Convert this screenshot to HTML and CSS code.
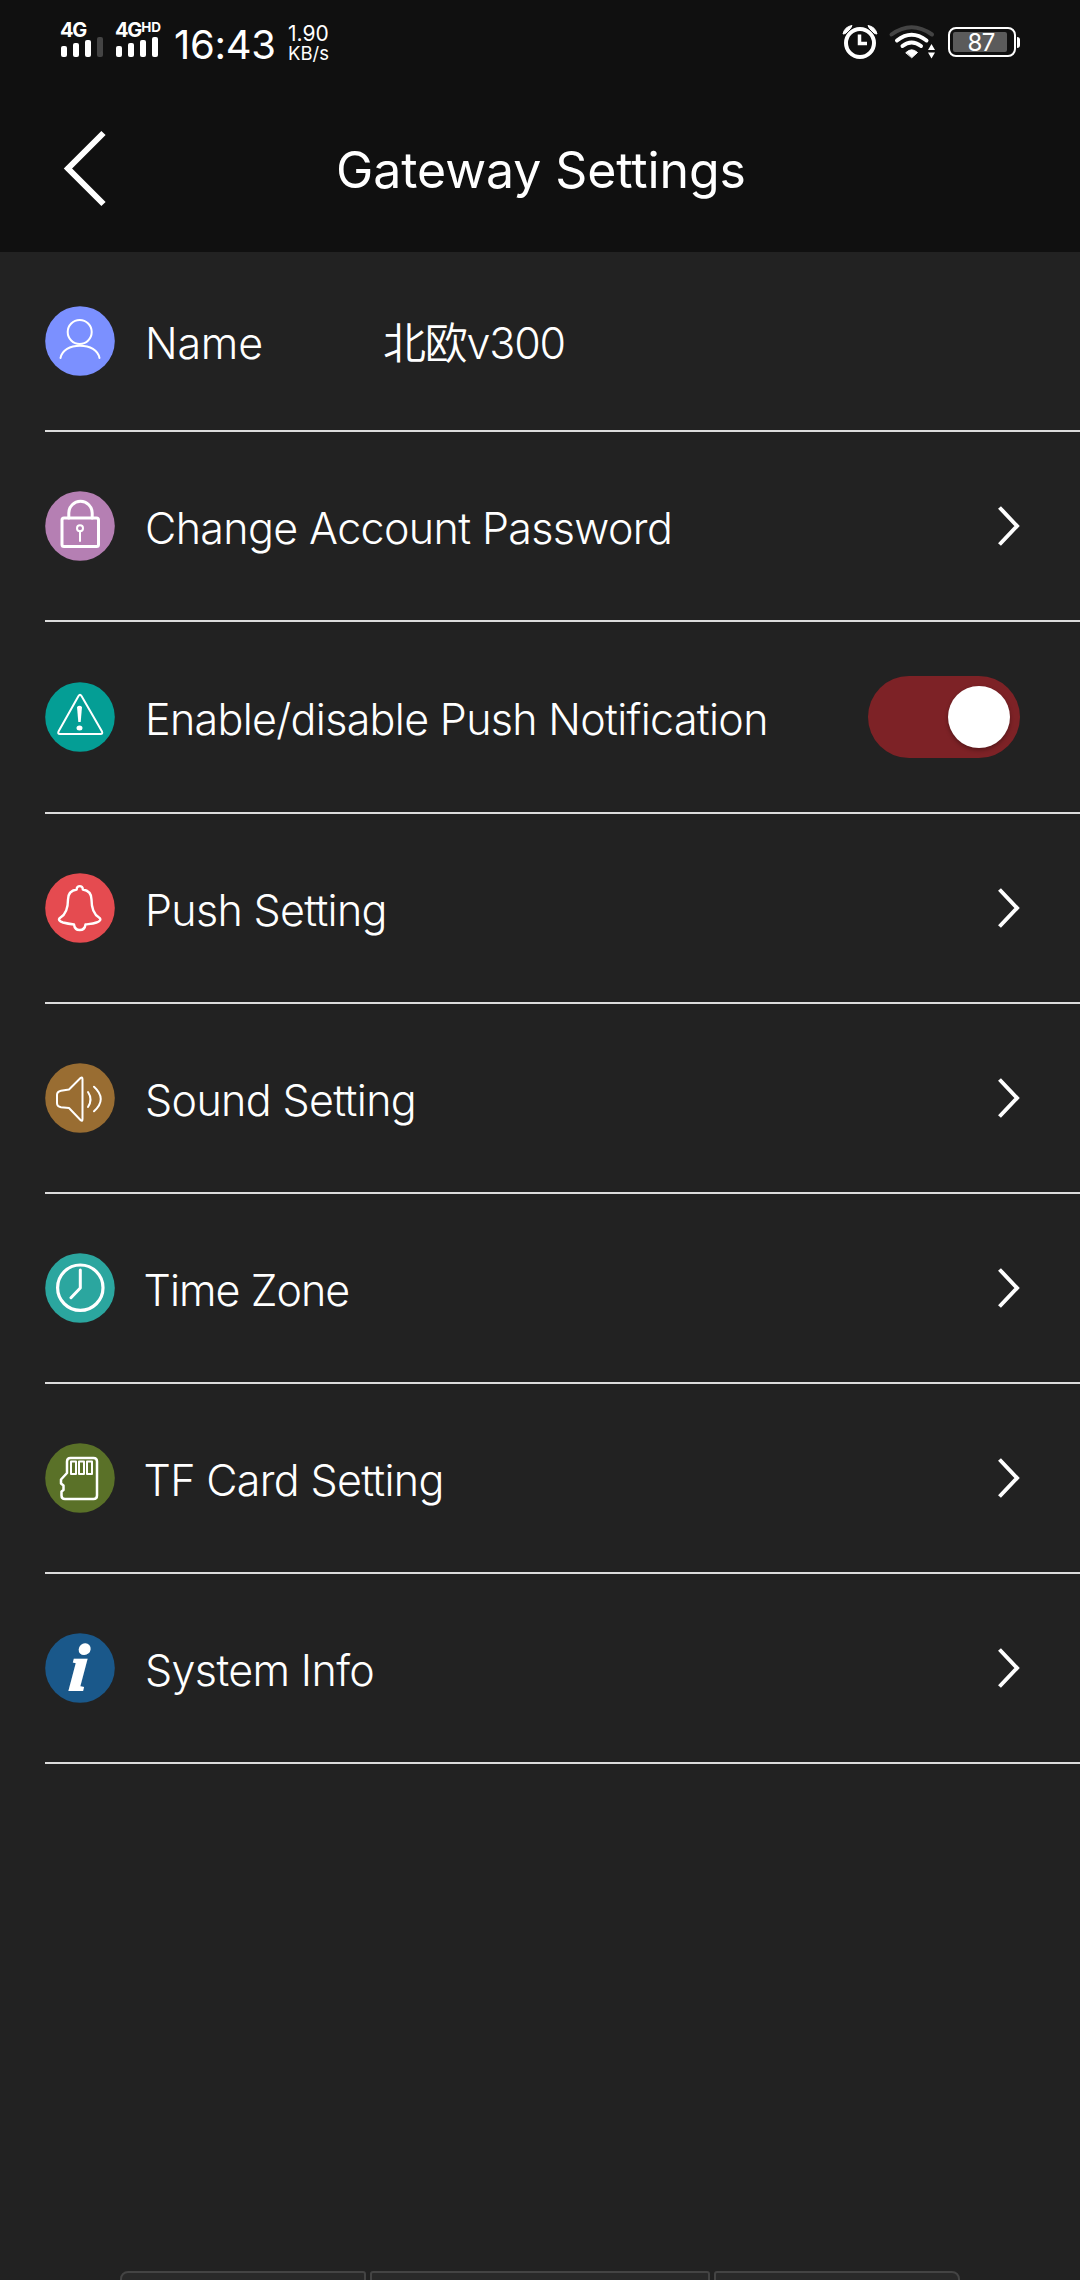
FILE: index.html
```html
<!DOCTYPE html>
<html lang="en">
<head>
<meta charset="utf-8">
<title>Gateway Settings</title>
<link rel="stylesheet" href="styles.css">
</head>
<body>
<div class="screen">
  <header class="top">
    <div class="status">
      <div class="sim">
        <div class="net">4G</div>
        <svg class="bars" width="42" height="20" viewBox="0 0 42 20"><g fill="#fff"><rect x="0" y="9" width="6" height="11" rx="2"/><rect x="12" y="6" width="6" height="14" rx="2"/><rect x="24" y="3" width="6" height="17" rx="2"/><rect x="36" y="0" width="6" height="20" rx="2" fill="#444"/></g></svg>
      </div>
      <div class="sim">
        <div class="net">4G<span class="hd">HD</span></div>
        <svg class="bars" width="42" height="20" viewBox="0 0 42 20"><g fill="#fff"><rect x="0" y="9" width="6" height="11" rx="2"/><rect x="12" y="6" width="6" height="14" rx="2"/><rect x="24" y="3" width="6" height="17" rx="2"/><rect x="36" y="0" width="6" height="20" rx="2"/></g></svg>
      </div>
      <div class="time">16:43</div>
      <div class="speed"><span class="rate">1.90</span><span class="unit">KB/s</span></div>
      <div class="indicators">
        <svg width="36" height="36" viewBox="0 0 36 36" fill="none" stroke="#fff"><circle cx="18" cy="19" r="14" stroke-width="4"/><path d="M17.500 10.500V19.500H25" stroke-width="3.500"/><path d="M1 10A11 11 0 0 1 10 1.500L8.500 4.500 3.500 9.500ZM35 10A11 11 0 0 0 26 1.500L27.500 4.500 32.500 9.500Z" fill="#fff" stroke-width="1"/></svg>
        <svg class="wifi" width="47" height="36" viewBox="0 0 47 36" fill="none" stroke-width="4" stroke-linecap="round"><path d="M2.500 10.500Q22.500-4 43 10.500" stroke="#444"/><path d="M8 16.500Q22.500 5 37.500 16.500M13.500 22Q22.500 15 32 22" stroke="#fff"/><path d="M17 28.500Q22.500 23 28.500 28.500L23 33.500Z" fill="#fff" stroke="#fff" stroke-width="1"/><path d="M39 26 42.500 20 46 26ZM39 28.500 42.500 34.500 46 28.500Z" fill="#fff"/></svg>
        <div class="battery"><div class="level">87</div></div>
      </div>
    </div>
    <div class="titlebar">
      <svg class="back" width="44" height="76" viewBox="0 0 44 76" fill="none" stroke="#fff" stroke-width="6"><path d="M40.500 3 5 38.500 40.500 74"/></svg>
      <h1 class="title">Gateway Settings</h1>
    </div>
  </header>

  <main class="list">
    <div class="row first">
      <svg class="icon" viewBox="0 0 70 70"><circle cx="35" cy="35" r="34.800" fill="#7b90ff"/><g class="line"><circle cx="34.700" cy="26" r="12"/><path d="M15.500 52C17 44 25 39.700 35 39.700S53 44 54.500 52"/></g></svg>
      <div class="label name">Name</div>
      <div class="label value">北欧v300</div>
    </div>
    <div class="row">
      <svg class="icon" viewBox="0 0 70 70"><circle cx="35" cy="35" r="34.800" fill="#b57fb3"/><g class="line"><path d="M23.800 27V22A11.700 11.700 0 0 1 47.200 22V27" stroke-width="3"/><rect x="17" y="27" width="36.500" height="28.500" rx="2" stroke-width="3"/><circle cx="35" cy="37.300" r="3"/><path d="M35 40.500V50"/></g></svg>
      <div class="label">Change Account Password</div>
      <svg class="chev" viewBox="0 0 22 40"><path d="M1.500 1.500 19 20 1.500 38.500"/></svg>
    </div>
    <div class="row tall">
      <svg class="icon" viewBox="0 0 70 70"><circle cx="35" cy="35" r="34.800" fill="#049e95"/><g class="line"><path d="M33.500 14Q35 11.500 36.500 14L57 49.500Q58 52 55.500 52H15Q12.500 52 13.500 49.500Z"/></g><path d="M32 25Q34.500 22.500 37 25L35.700 40H33.300Z" fill="#fff"/><ellipse cx="34.500" cy="46" rx="3" ry="2.500" fill="#fff"/></svg>
      <div class="label push">Enable/disable Push Notification</div>
      <div class="toggle"><div class="knob"></div></div>
    </div>
    <div class="row">
      <svg class="icon" viewBox="0 0 70 70"><circle cx="35" cy="35" r="34.800" fill="#e54b50"/><g class="line"><path stroke-width="2.400" d="M31.700 16.500C31.500 12 38 12 37.800 16.500C44 17.500 46.500 21.500 46.500 26.500C46.500 37 49 41.500 54 44.500C57 46.500 54.500 48.500 51.500 49.500C47 51 43 51 40.500 51.500C40 55.500 38 57 34.700 57S29.500 55.500 29 51.500C25 51 22 50.500 18 49.500C14.500 48.500 12.500 46.500 15.500 44.500C20.500 41.500 23 37 23 26.500C23 21.500 25.500 17.500 31.700 16.500Z"/></g></svg>
      <div class="label push">Push Setting</div>
      <svg class="chev" viewBox="0 0 22 40"><path d="M1.500 1.500 19 20 1.500 38.500"/></svg>
    </div>
    <div class="row">
      <svg class="icon" viewBox="0 0 70 70"><circle cx="35" cy="35" r="34.800" fill="#996d32"/><g class="line"><path d="M24 26.500 35.500 15Q37.500 13.500 37.500 16.500V56Q37.500 59 35.500 57L24 45 16 44.200Q12 43.500 12 40V32Q12 28.500 16 27.700ZM43 29Q48 36.500 43 44M49 23.700Q62.500 36 49 48.300"/></g></svg>
      <div class="label">Sound Setting</div>
      <svg class="chev" viewBox="0 0 22 40"><path d="M1.500 1.500 19 20 1.500 38.500"/></svg>
    </div>
    <div class="row">
      <svg class="icon" viewBox="0 0 70 70"><circle cx="35" cy="35" r="34.800" fill="#2ba69f"/><g class="line"><circle cx="35.300" cy="34.700" r="22.700" stroke-width="3.200"/><path stroke-width="3" d="M35.300 17V35L26 44.700"/></g></svg>
      <div class="label zone">Time Zone</div>
      <svg class="chev" viewBox="0 0 22 40"><path d="M1.500 1.500 19 20 1.500 38.500"/></svg>
    </div>
    <div class="row">
      <svg class="icon" viewBox="0 0 70 70"><circle cx="35" cy="35" r="34.800" fill="#5a7128"/><g class="line"><path stroke-width="2.500" d="M25.500 15H48.500Q52 15 52 18.500V52.500Q52 56 48.500 56H20Q16.500 56 16.500 52.500V48.500L18.500 47V42.500L16 40.500V36.500L22 30V18.500Q22 15 25.500 15Z"/><path d="M26 18.500H31V31H26ZM34 18.500H39V31H34ZM42 18.500H47V31H42Z"/></g></svg>
      <div class="label card">TF Card Setting</div>
      <svg class="chev" viewBox="0 0 22 40"><path d="M1.500 1.500 19 20 1.500 38.500"/></svg>
    </div>
    <div class="row">
      <svg class="icon" viewBox="0 0 70 70"><circle cx="35" cy="35" r="34.800" fill="#1a588a"/><text class="info" x="37" y="56.500" text-anchor="middle" transform="skewX(-5)">i</text></svg>
      <div class="label">System Info</div>
      <svg class="chev" viewBox="0 0 22 40"><path d="M1.500 1.500 19 20 1.500 38.500"/></svg>
    </div>
  </main>
  <footer class="keys"><div class="key"></div><div class="key mid"></div><div class="key"></div></footer>
</div>
</body>
</html>
```
FILE: styles.css
```css
* { box-sizing: border-box; }
body { margin: 0; background: #222; color: #fff; font-family: Inter, "Noto Sans CJK SC", sans-serif; }
svg { display: block; flex: none; overflow: visible; }
.screen { width: 1080px; height: 2280px; overflow: hidden; display: flex; flex-direction: column; background: #222; }

.top { height: 252px; flex: none; background: #101010; }
.status { height: 84px; padding: 20px 60px 0 60px; display: flex; align-items: flex-start; }
.sim { width: 55px; padding-left: 1px; }
.net { height: 17px; margin-left: -1px; line-height: 20px; font-size: 20px; font-weight: 700; letter-spacing: -1.200px; white-space: nowrap; display: flex; align-items: flex-start; }
.hd { font-size: 13.500px; line-height: 15px; letter-spacing: 0; }
.time { width: 118px; padding-left: 4px; font-size: 40px; line-height: 49px; letter-spacing: -.3px; white-space: nowrap; }
.speed { display: flex; flex-direction: column; padding-top: 4px; font-size: 21px; line-height: 20px; }
.unit { font-size: 18.500px; line-height: 19px; }
.indicators { margin-left: auto; display: flex; align-items: center; padding-top: 4px; }
.wifi { margin: 0 12px 0 11px; }
.battery { position: relative; width: 68px; height: 30px; padding: 3px; border: 2px solid #fff; border-radius: 8px; margin-right: 4px; }
.battery::after { content: ""; position: absolute; right: -6px; top: 8px; width: 3px; height: 11px; border-radius: 0 3px 3px 0; background: #fff; }
.level { width: 54px; height: 20px; background: #5b5b5b; border-radius: 2px; font-size: 24px; line-height: 21px; letter-spacing: -.8px; text-indent: 2px; text-align: center; }

.titlebar { display: flex; align-items: center; height: 167px; padding: 0 63px; }
.back { margin-right: -44px; }
.title { flex: 1; margin: 0; padding: 5px 0 0 2px; text-align: center; font-size: 50px; line-height: 60px; letter-spacing: -.1px; font-weight: 400; white-space: nowrap; }

.row { height: 190px; margin-left: 45px; padding-right: 60px; border-bottom: 2px solid #dcdcdc; display: flex; align-items: center; }
.row.first { height: 180px; }
.row.tall { height: 192px; }
.icon { width: 70px; height: 70px; }
.line { fill: none; stroke: #fff; stroke-width: 2; stroke-linecap: round; stroke-linejoin: round; }
.info { font: italic 700 66px "Liberation Serif", serif; fill: #fff; stroke: #fff; stroke-width: 2; }
.label { padding: 4px 0 0 30px; font-size: 43px; line-height: 52px; font-weight: 350; letter-spacing: -.63px; white-space: nowrap; }
.name { width: 238px; letter-spacing: -.2px; }
.value { letter-spacing: -1.200px; }
.push { letter-spacing: -.68px; }
.zone { padding-left: 28.500px; letter-spacing: -.95px; }
.card { padding-left: 28.500px; letter-spacing: -.68px; }
.chev { width: 22px; height: 40px; margin-left: auto; fill: none; stroke: #fff; stroke-width: 4; }
.toggle { width: 152px; height: 82px; margin-left: auto; padding: 10px; border-radius: 41px; background: #7d2226; display: flex; justify-content: flex-end; }
.knob { width: 62px; height: 62px; border-radius: 50%; background: #fff; box-shadow: 0 2px 4px #0005; }

.keys { margin: auto 120px 0; height: 9px; display: flex; gap: 4px; overflow: hidden; flex: none; }
.key { width: 246px; height: 40px; border: 2px solid #444; border-radius: 8px 3px 3px 8px; background: #292929; flex: none; }
.key.mid { width: 340px; border-radius: 3px; }
.key:last-child { border-radius: 3px 8px 8px 3px; }
```
